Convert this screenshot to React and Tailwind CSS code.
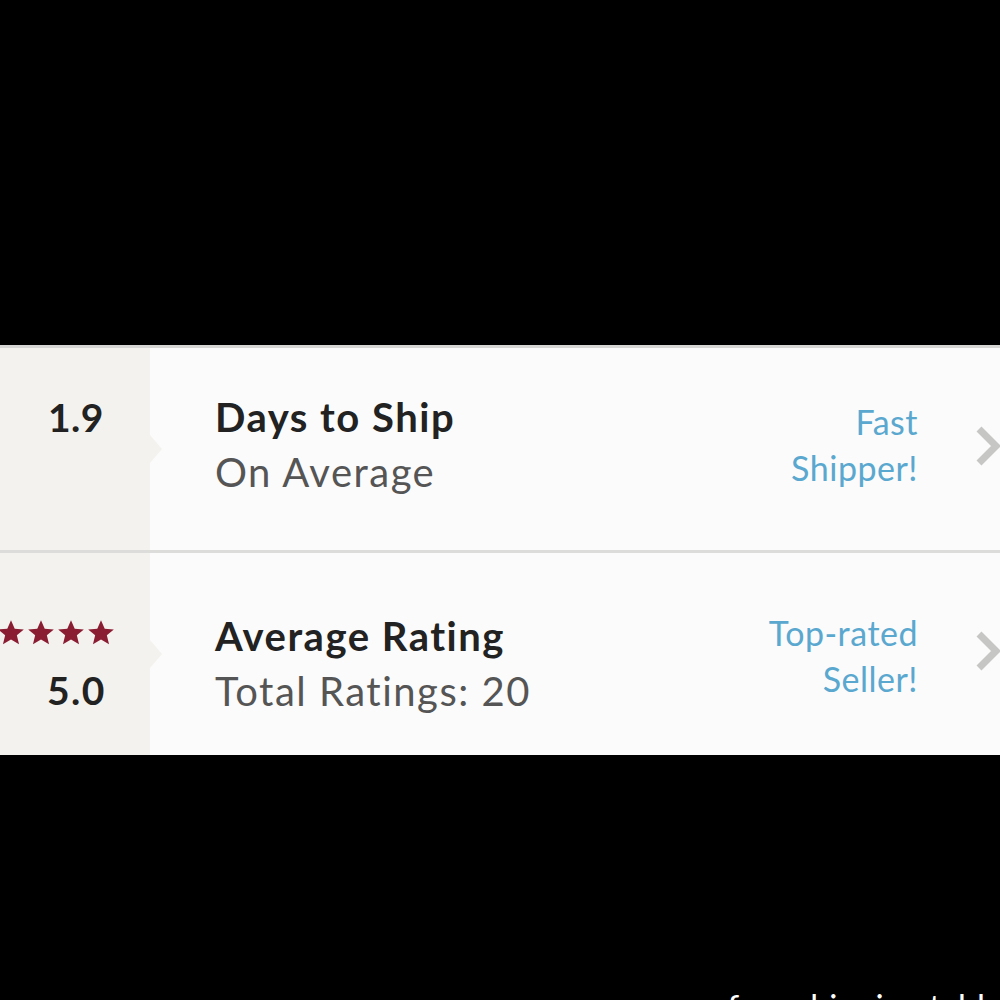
import React from 'react';

const font = { fontFamily: 'Lato, "Open Sans", sans-serif' };

function Star() {
  return (
    <svg viewBox="0 0 24 24" className="w-[28px] h-[28px] shrink-0" fill="#8b1d33">
      <path d="M12 1l3.2 7.3 7.8.6-6 5.1 1.9 7.7L12 17.6l-6.9 4.1 1.9-7.7-6-5.1 7.8-.6z" />
    </svg>
  );
}

function Chevron() {
  return (
    <svg viewBox="0 0 30 40" className="w-[30px] h-[40px]" fill="none" stroke="#c6c6c4" strokeWidth="7">
      <path d="M5 3l17 17L5 37" />
    </svg>
  );
}

function Row({ left, title, subtitle, badge, textClass, badgeClass }) {
  return (
    <div className="flex h-[202px] bg-[#fbfbfb]">
      {/* left stat column */}
      <div className="relative w-[150px] shrink-0 bg-[#f4f2ee] flex flex-col items-end justify-center pr-[46px]">
        {left}
        <div className="absolute right-[-12px] top-1/2 -translate-y-1/2 w-0 h-0 border-y-[14px] border-y-transparent border-l-[12px] border-l-[#f4f2ee]" />
      </div>
      <div className="flex-1 flex items-center pl-[65px]">
        <div className={`flex-1 flex flex-col ${textClass}`}>
          <div className="text-[40px] font-bold text-[#222] leading-[55px] tracking-[1.5px]">{title}</div>
          <div className="text-[40px] text-[#555] leading-[55px] tracking-[1.5px]">{subtitle}</div>
        </div>
        <div className={`text-right text-[34px] text-[#5aa8cf] leading-[46px] pr-[56px] tracking-[0.5px] ${badgeClass}`}>{badge}</div>
        <div className="w-[26px] overflow-hidden self-center mt-[-6px]">
          <Chevron />
        </div>
      </div>
    </div>
  );
}

export default function App() {
  return (
    <div className="w-[1000px] h-[1000px] bg-black overflow-hidden flex flex-col" style={font}>
      <div className="h-[345px] shrink-0" />
      <div className="h-[3px] bg-[#d6d6d4] shrink-0" />
      <Row
        left={<div className="text-[39px] font-bold text-[#222] mt-[-64px] tracking-[0.5px]">1.9</div>}
        title="Days to Ship"
        subtitle="On Average"
        badge={<><div>Fast</div><div>Shipper!</div></>}
        textClass="mt-[-8px]"
        badgeClass="mt-[-8px]"
      />
      <div className="h-[3px] bg-[#dcdcdb] shrink-0" />
      <Row
        left={
          <div className="flex flex-col items-end mt-[23px] mr-[-2px]">
            <div className="flex gap-[2px] mr-[-9px]">
              <Star /><Star /><Star /><Star /><Star />
            </div>
            <div className="text-[39px] font-bold text-[#222] mt-[21px] leading-[44px] tracking-[1.5px]">5.0</div>
          </div>
        }
        title="Average Rating"
        subtitle="Total Ratings: 20"
        badge={<><div>Top-rated</div><div>Seller!</div></>}
        textClass="mt-[20px]"
        badgeClass="mt-[4px]"
      />
      <div className="flex-1 relative">
        <div className="absolute left-[690px] top-[226px] text-[34px] text-white whitespace-nowrap">ar free shipping table</div>
      </div>
    </div>
  );
}
